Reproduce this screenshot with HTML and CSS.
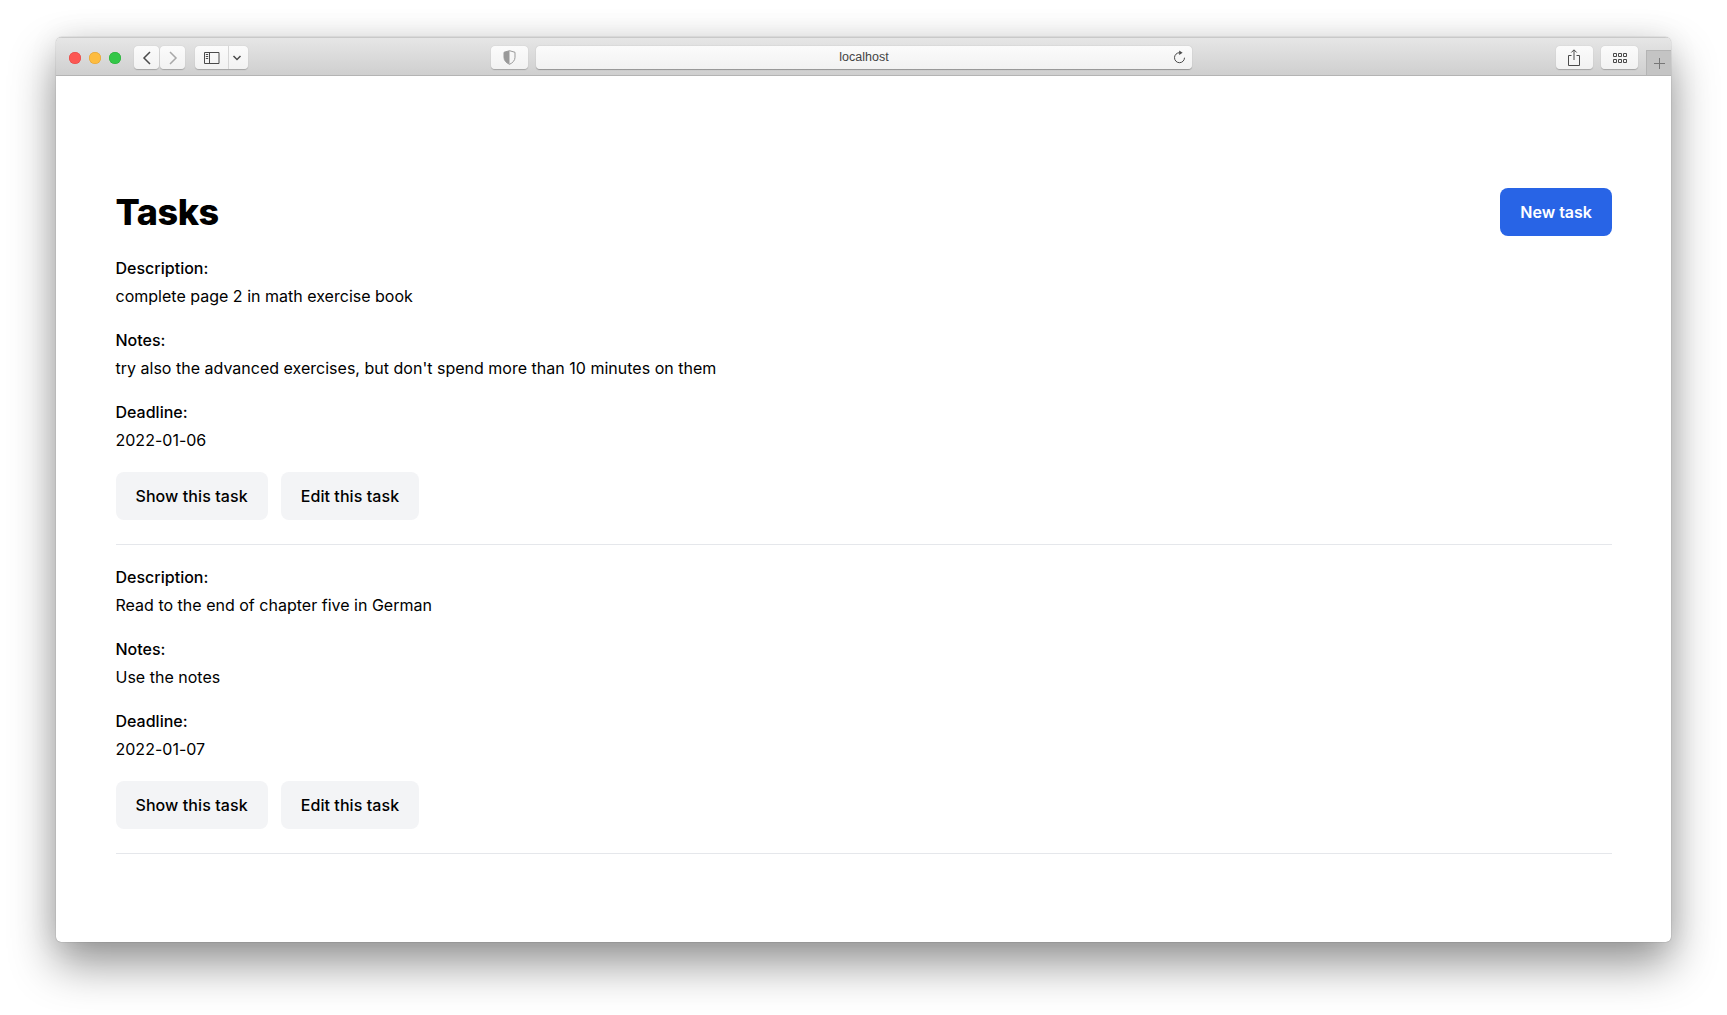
FILE: index.html
```html
<!DOCTYPE html>
<html lang="en">
<head>
<meta charset="utf-8">
<title>Tasks</title>
<link rel="stylesheet" href="styles.css">
</head>
<body>
<div class="window">
  <header class="toolbar">
    <div class="lights">
      <span class="light red"></span>
      <span class="light yellow"></span>
      <span class="light green"></span>
    </div>
    <div class="pair nav">
      <span class="tool back"><svg width="12" height="16" viewBox="0 0 12 16"><path d="M9 2 3 8l6 6" class="ink"/></svg></span>
      <span class="tool forward"><svg width="12" height="16" viewBox="0 0 12 16"><path d="M3 2l6 6-6 6" class="ink faint"/></svg></span>
    </div>
    <div class="tool sidebar">
      <span class="sidebar-main"><svg width="16" height="12" viewBox="0 0 16 12"><path d="M.5.5h14.500v11H.5zM5.500.5v11" class="ink thin"/><path d="M1.800 2.500h2.400M1.800 4.500h2.400M1.800 6.500h2.400" class="ink thin"/></svg></span>
      <span class="sidebar-more"><svg width="10" height="6" viewBox="0 0 10 6"><path d="M1.500 1 5 4.500 8.500 1" class="ink"/></svg></span>
    </div>
    <span class="tool shield"><svg width="13" height="15" viewBox="0 0 13 15"><path d="M6.500.7 12 2.300v5c0 3.200-2.300 5.600-5.500 7C3.300 12.900 1 10.500 1 7.300v-5z" class="shield-line"/><path d="M6.500.7 1 2.300v5c0 3.200 2.300 5.600 5.500 7z" class="shield-fill"/></svg></span>
    <div class="url">
      <span class="url-text">localhost</span>
      <svg class="reload" width="13" height="14" viewBox="0 0 13 14"><path d="M6.500 2.700a5 5 0 1 0 5 5" class="ink thin"/><path d="M6.200 .4 9.600 2.700 6.200 5z" class="arrow"/></svg>
    </div>
    <span class="tool wide share"><svg width="12" height="17" viewBox="0 0 12 17"><path d="M3.500 6.500H.5v10h11v-10h-3M6 11V1M3.300 3.500 6 .8l2.700 2.700" class="ink thin"/></svg></span>
    <span class="tool wide grid"><svg width="14" height="10" viewBox="0 0 14 10"><path d="M.5.500h3v3h-3zM5.500.500h3v3h-3zM10.500.500h3v3h-3zM.5 6.500h3v3h-3zM5.500 6.500h3v3h-3zM10.500 6.500h3v3h-3z" class="ink thin"/></svg></span>
    <span class="newtab"><svg width="13" height="13" viewBox="0 0 13 13"><path d="M6.500 1v11M1 6.500h11" class="plus"/></svg></span>
  </header>
  <main class="content">
    <div class="head">
      <h1 class="title">Tasks</h1>
      <a class="btn primary">New task</a>
    </div>
    <section class="task">
      <p class="field"><strong class="label">Description:</strong>complete page 2 in math exercise book</p>
      <p class="field"><strong class="label">Notes:</strong>try also the advanced exercises, but don't spend more than 10 minutes on them</p>
      <p class="field"><strong class="label">Deadline:</strong>2022-01-06</p>
      <div class="actions"><a class="btn soft">Show this task</a><a class="btn soft">Edit this task</a></div>
    </section>
    <section class="task">
      <p class="field"><strong class="label">Description:</strong>Read to the end of chapter five in German</p>
      <p class="field"><strong class="label">Notes:</strong>Use the notes</p>
      <p class="field"><strong class="label">Deadline:</strong>2022-01-07</p>
      <div class="actions"><a class="btn soft">Show this task</a><a class="btn soft">Edit this task</a></div>
    </section>
  </main>
</div>
</body>
</html>
```
FILE: styles.css
```css
* { box-sizing: border-box; }
html, body { margin: 0; height: 100%; }
body {
  background: #fff;
  padding: 37px 56px 0;
  overflow: hidden;
  font-family: Inter, "Liberation Sans", sans-serif;
  color: #000;
}
.window {
  width: 1615px;
  height: 905px;
  background: #fff;
  border-radius: 6px 6px 5px 5px;
  box-shadow: 0 0 1px rgba(0,0,0,.55), 0 22px 46px rgba(0,0,0,.42), 0 0 30px rgba(0,0,0,.08);
  overflow: hidden;
}
.toolbar {
  height: 39px;
  display: flex;
  align-items: center;
  padding: 2px 0 0 13px;
  background: linear-gradient(#e6e6e6, #cfcfcf);
  border-top: 1px solid #c9c9c9;
  border-bottom: 1px solid #b4b4b4;
  position: relative;
}
.lights { display: flex; gap: 8px; }
.light { width: 12px; height: 12px; border-radius: 50%; }
.red { background: #fc5753; box-shadow: inset 0 0 0 .5px #df4744; }
.yellow { background: #fdbc40; box-shadow: inset 0 0 0 .5px #de9f34; }
.green { background: #33c748; box-shadow: inset 0 0 0 .5px #27aa35; }
.pair { display: flex; gap: 1px; margin-left: 13px; }
.tool {
  height: 23px;
  display: flex;
  align-items: center;
  justify-content: center;
  background: linear-gradient(#fbfbfb, #f2f2f2);
  border-radius: 4px;
  box-shadow: 0 .5px 1px rgba(0,0,0,.22);
}
.back, .forward { width: 25px; }
.sidebar { width: 53px; margin-left: 10px; justify-content: flex-start; }
.sidebar-main { width: 34px; height: 100%; display: flex; align-items: center; justify-content: center; border-right: 1px solid #d6d6d6; }
.sidebar-more { width: 19px; display: flex; align-items: center; justify-content: center; padding-right: 3px; }
.shield { width: 37px; margin-left: 243px; }
.url {
  width: 656px;
  height: 23px;
  margin-left: 8px;
  position: relative;
  display: flex;
  align-items: center;
  justify-content: center;
  background: linear-gradient(#fbfbfb, #f2f2f2);
  border-radius: 4px;
  box-shadow: 0 .5px 1px rgba(0,0,0,.3);
}
.url-text { font: 12.500px/1 "Liberation Sans", Arial, sans-serif; color: #444; }
.reload { position: absolute; right: 6px; top: 4px; }
.wide { width: 37px; }
.share { margin-left: 364px; }
.share svg { margin-left: -1px; }
.grid { margin-left: 8px; }
.newtab {
  width: 25px;
  height: 25px;
  margin-left: 8px;
  align-self: flex-end;
  display: flex;
  align-items: center;
  justify-content: center;
  background: #c4c4c4;
  border-left: 1px solid #b4b4b4;
  border-top: 1px solid #b4b4b4;
}
.ink { fill: none; stroke: #4a4a4a; stroke-width: 1.5; }
.thin { stroke-width: 1; }
.faint { stroke: #a8a8a8; }
.plus { fill: none; stroke: #777; stroke-width: 1; }
.arrow { fill: #4a4a4a; }
.shield-line { fill: none; stroke: #999; stroke-width: 1; }
.shield-fill { fill: #999; }
.content { padding: 112px 59px 0 59.500px; letter-spacing: .01px; }
.head { display: flex; justify-content: space-between; align-items: center; margin-bottom: 20px; }
.title { margin: 0; font-size: 36px; line-height: 40px; font-weight: 800; letter-spacing: -.45px; }
.btn {
  display: inline-block;
  height: 48px;
  padding: 12px 20px;
  font-size: 16px;
  line-height: 24px;
  font-weight: 500;
  border-radius: 8px;
  letter-spacing: .08px;
}
.primary { background: #2864e6; color: #fff; font-weight: 600; letter-spacing: .01px; }
.soft { background: #f3f4f6; color: #000; }
.task { border-bottom: 1px solid #e5e7eb; padding-bottom: 24px; margin-bottom: 20px; }
.field { margin: 0 0 20px; font-size: 16px; line-height: 24px; }
.label { display: block; font-weight: 500; margin-bottom: 4px; }
.actions { display: flex; gap: 13px; }
```
